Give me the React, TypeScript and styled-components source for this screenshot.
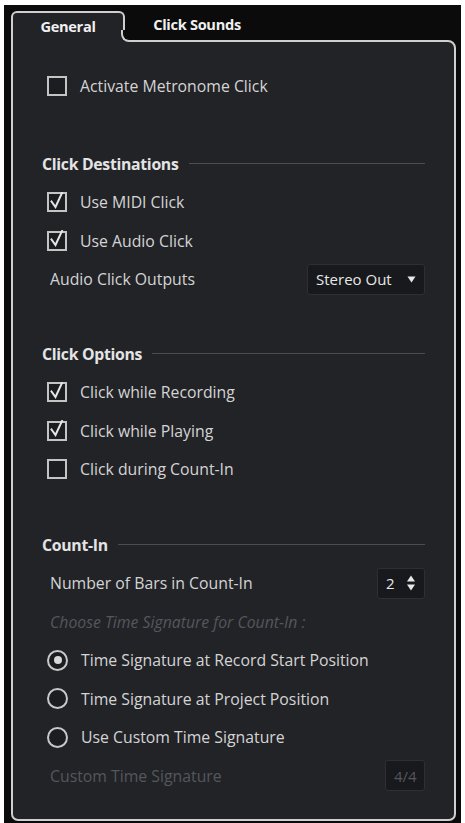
import React from "react";
import styled, { createGlobalStyle, css } from "styled-components";

const Global = createGlobalStyle`
  html, body { margin: 0; padding: 0; background: #ffffff; }
  body { font-family: "Open Sans", "Noto Sans", sans-serif; }
  * { box-sizing: border-box; }
`;

const PANEL = "#222327";
const FRAME = "#0b0b0c";
const EDGE = "#cfcfcf";

const Frame = styled.div`
  margin: 5px 4px 0 4px;
  width: 457px;
  height: 818px;
  background: ${FRAME};
  padding: 6px 5px 2px 7px;
  display: flex;
  flex-direction: column;
`;

const TabBar = styled.div`
  display: flex;
  height: 31px;
  position: relative;
  z-index: 2;
`;

const Tab = styled.div<{ $active?: boolean }>`
  width: ${(p) => (p.$active ? 114 : 144)}px;
  height: 31px;
  display: flex;
  align-items: center;
  justify-content: center;
  padding-bottom: ${(p) => (p.$active ? 4 : 6)}px;
  font-size: 14.6px;
  font-weight: 700;
  color: #f0f0f0;
  letter-spacing: -0.3px;
  position: relative;
  ${(p) =>
    p.$active &&
    css`
      background: ${PANEL};
      border: 2px solid ${EDGE};
      border-bottom: none;
      border-radius: 6px 6px 0 0;
      &::before,
      &::after {
        content: "";
        position: absolute;
        right: -10px;
        bottom: 0;
        width: 10px;
        height: 10px;
      }
      &::before {
        background: ${PANEL};
      }
      &::after {
        background: ${FRAME};
        border-left: 2px solid ${EDGE};
        border-bottom: 2px solid ${EDGE};
        border-bottom-left-radius: 8px;
      }
    `}
`;

const Panel = styled.div`
  flex: 1;
  margin-top: -2px;
  background: ${PANEL};
  border: 2px solid ${EDGE};
  border-radius: 0 8px 7px 7px;
  padding: 25px 29px 0 29px;
  display: flex;
  flex-direction: column;
`;

const Section = styled.div<{ $gap: number }>`
  margin-top: ${(p) => p.$gap}px;
  display: flex;
  flex-direction: column;
`;

const Row = styled.div<{ $indent?: number }>`
  height: 38.5px;
  display: flex;
  align-items: center;
  padding-left: ${(p) => p.$indent ?? 5}px;
  gap: 13px;
  font-size: 15.8px;
  color: #d4d4d4;
`;

const Header = styled.div`
  height: 38.5px;
  display: flex;
  align-items: center;
  gap: 8px;
  font-size: 15.8px;
  font-weight: 700;
  color: #e4e4e4;
  letter-spacing: -0.3px;
`;

const Rule = styled.div`
  flex: 1;
  height: 1px;
  background: #4c4d52;
  margin-left: 2px;
`;

const Label = styled.span<{ $dim?: boolean; $italic?: boolean }>`
  flex: 1;
  white-space: nowrap;
  color: ${(p) => (p.$dim ? "#54575c" : "#d4d4d4")};
  font-style: ${(p) => (p.$italic ? "italic" : "normal")};
`;

const Box = styled.span`
  width: 20px;
  height: 20px;
  border: 2px solid #c4c4c4;
  background: #1c1d20;
  display: inline-flex;
  align-items: center;
  justify-content: center;
  flex: none;
`;

const Radio = styled.span<{ $on?: boolean }>`
  width: 21px;
  height: 21px;
  border-radius: 50%;
  border: 2.5px solid #c8c8c8;
  background: #1c1d20;
  display: inline-flex;
  align-items: center;
  justify-content: center;
  flex: none;
  &::after {
    content: "";
    width: 8px;
    height: 8px;
    border-radius: 50%;
    background: ${(p) => (p.$on ? "#d8d8d8" : "transparent")};
  }
`;

const Control = styled.div<{ $w: number; $dim?: boolean }>`
  width: ${(p) => p.$w}px;
  height: 31px;
  background: #18191c;
  border: 1px solid #2e2f33;
  border-radius: 3px;
  display: flex;
  align-items: center;
  justify-content: space-between;
  padding: 0 8px 0 8px;
  font-size: 15px;
  color: ${(p) => (p.$dim ? "#54575c" : "#e8e8e8")};
  flex: none;
`;

const Check = () => (
  <svg width="16" height="18" viewBox="0 0 16 18" style={{ marginTop: -3 }}>
    <path d="M2.5 9.5 L6.5 15 L13 1" fill="none" stroke="#e6e6e6" strokeWidth="2" strokeLinecap="square" />
  </svg>
);

const CheckBox = ({ on }: { on?: boolean }) => <Box>{on && <Check />}</Box>;

const Caret = () => (
  <svg width="9" height="7" viewBox="0 0 9 7">
    <path d="M0.5 0.5 H8.5 L4.5 6.5 Z" fill="#e8e8e8" />
  </svg>
);

const Spin = () => (
  <svg width="10" height="18" viewBox="0 0 10 18">
    <path d="M1 7.5 L5 1.5 L9 7.5 Z" fill="#e8e8e8" />
    <path d="M1 10.5 L5 16.5 L9 10.5 Z" fill="#e8e8e8" />
  </svg>
);

export default function App() {
  return (
    <>
      <Global />
      <Frame>
        <TabBar>
          <Tab $active>General</Tab>
          <Tab>Click Sounds</Tab>
        </TabBar>
        <Panel>
          <Row>
            <CheckBox />
            <Label>Activate Metronome Click</Label>
          </Row>

          <Section $gap={39}>
            <Header>
              Click Destinations
              <Rule />
            </Header>
            <Row>
              <CheckBox on />
              <Label>Use MIDI Click</Label>
            </Row>
            <Row>
              <CheckBox on />
              <Label>Use Audio Click</Label>
            </Row>
            <Row $indent={8}>
              <Label>Audio Click Outputs</Label>
              <Control $w={118}>
                Stereo Out
                <Caret />
              </Control>
            </Row>
          </Section>

          <Section $gap={36}>
            <Header>
              Click Options
              <Rule />
            </Header>
            <Row>
              <CheckBox on />
              <Label>Click while Recording</Label>
            </Row>
            <Row>
              <CheckBox on />
              <Label>Click while Playing</Label>
            </Row>
            <Row>
              <CheckBox />
              <Label>Click during Count-In</Label>
            </Row>
          </Section>

          <Section $gap={37}>
            <Header>
              Count-In
              <Rule />
            </Header>
            <Row $indent={8}>
              <Label>Number of Bars in Count-In</Label>
              <Control $w={48}>
                2
                <Spin />
              </Control>
            </Row>
            <Row $indent={8}>
              <Label $dim $italic>
                Choose Time Signature for Count-In :
              </Label>
            </Row>
            <Row>
              <Radio $on />
              <Label>Time Signature at Record Start Position</Label>
            </Row>
            <Row>
              <Radio />
              <Label>Time Signature at Project Position</Label>
            </Row>
            <Row>
              <Radio />
              <Label>Use Custom Time Signature</Label>
            </Row>
            <Row $indent={8}>
              <Label $dim>Custom Time Signature</Label>
              <Control $w={40} $dim>
                4/4
              </Control>
            </Row>
          </Section>
        </Panel>
      </Frame>
    </>
  );
}
